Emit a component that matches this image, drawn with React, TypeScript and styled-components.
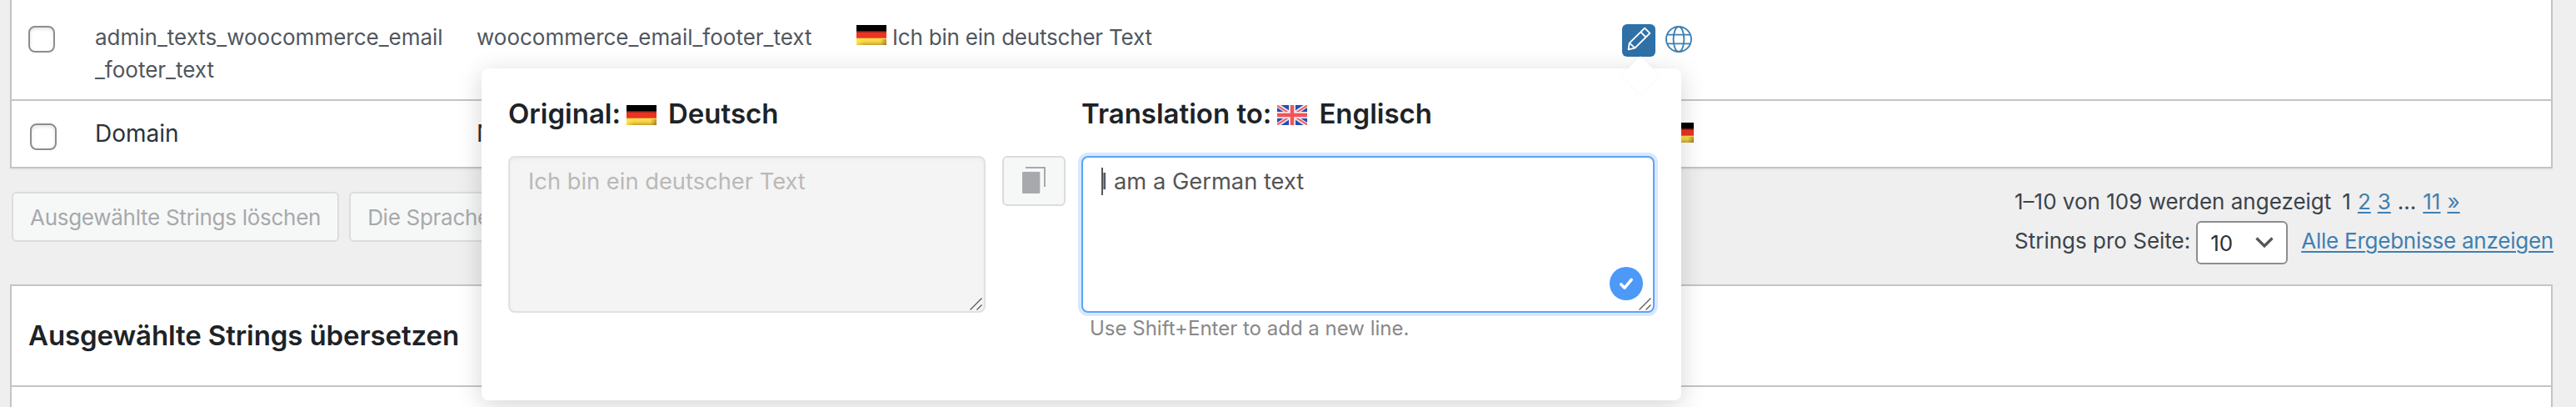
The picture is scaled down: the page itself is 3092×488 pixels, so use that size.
import React from 'react';
import styled, { createGlobalStyle, css } from 'styled-components';

const GlobalStyle = createGlobalStyle`
  * {
    box-sizing: border-box;
  }

  body {
    margin: 0;
    background: #efefef;
    color: #3c434a;
    font-family: Inter, "Liberation Sans", sans-serif;
    font-size: 26px;
    line-height: 39px;
  }
`;

const Page = styled.div`
  position: relative;
  height: 488px;
  padding: 0 28px 0 12px;
  overflow: hidden;
`;

const Table = styled.div`
  background: #fff;
  border: 2px solid #c3c4c9;
  border-top: 0;
  box-shadow: 0 2px 2px rgba(0, 0, 0, 0.04);
`;

const Row = styled.div<{ $first?: boolean }>`
  display: grid;
  grid-template-columns: 100px 458px 456px 919px 1fr;
  align-items: start;

  ${({ $first }) =>
    $first
      ? css`
          height: 121px;
          padding-top: 25px;
          color: #50575e;
          border-bottom: 2px solid #c3c4c9;
        `
      : css`
          height: 79px;
          padding-top: 20px;
          color: #2c3338;
          font-size: 28px;
        `}
`;

const Checkbox = styled.span<{ $indent: number; $top: number }>`
  width: 32px;
  height: 32px;
  margin: ${({ $top }) => $top}px 0 0 ${({ $indent }) => $indent}px;
  border: 2px solid #8c8c93;
  border-radius: 8px;
  background: #fff;
  box-shadow: inset 0 2px 4px rgba(0, 0, 0, 0.1);
`;

const Domain = styled.div`
  width: 424px;
  overflow-wrap: anywhere;
`;

const Value = styled.div`
  display: flex;
  align-items: flex-start;
  gap: 7px;
  letter-spacing: -0.2px;

  svg {
    margin-top: 5px;
  }
`;

const Actions = styled.div`
  display: flex;
  align-items: flex-start;
  gap: 11px;
  padding-top: 4px;
`;

const EditButton = styled.button`
  display: block;
  width: 40px;
  height: 39px;
  padding: 0;
  border: 0;
  border-radius: 6px;
  background: #2f70a6;
`;

const LanguageFlag = styled.div`
  display: flex;
  padding: 6px 0 0 50px;
`;

const Flag = styled.svg`
  flex: none;
  display: block;
  width: 36px;
  height: 24px;
`;

const Toolbar = styled.div`
  display: flex;
  justify-content: space-between;
  align-items: flex-start;
  height: 139px;
  padding-left: 2px;
`;

const BulkActions = styled.div`
  display: flex;
  gap: 12px;
  padding-top: 28px;
`;

const BulkButton = styled.button`
  height: 60px;
  padding: 0 20px;
  border: 2px solid #dcdcde;
  border-radius: 6px;
  background: #f6f8f7;
  color: #a7a9ad;
  font: inherit;
  letter-spacing: -0.28px;
  white-space: nowrap;
`;

const Pagination = styled.div`
  width: 646px;
  padding-top: 20px;
`;

const PageLinks = styled.div`
  display: flex;
  gap: 8px;
`;

const Count = styled.span`
  margin-right: 5px;
`;

const Link = styled.a`
  color: #3f80b0;
  text-decoration: underline;
  text-decoration-thickness: 2px;
  text-underline-offset: 3px;
`;

const PerPage = styled.div`
  display: flex;
  align-items: center;
  margin-top: 4px;
  white-space: nowrap;
`;

const PerPageLabel = styled.span`
  flex: none;
  padding-bottom: 5px;
`;

const Select = styled.div`
  display: flex;
  flex: none;
  align-items: center;
  justify-content: space-between;
  width: 110px;
  height: 52px;
  margin: 0 16px 0 7px;
  padding: 0 15px 0 15px;
  border: 2px solid #8c8c93;
  border-radius: 6px;
  background: #fff;
  color: #2c3338;
`;

const AllLink = styled(Link)`
  padding-bottom: 5px;
  letter-spacing: -0.24px;
`;

const Panel = styled.section`
  height: 160px;
  border: 2px solid #c3c4c9;
  background: #fff;
`;

const PanelTitle = styled.h2`
  display: flex;
  align-items: center;
  height: 121px;
  margin: 0;
  padding: 0 20px;
  border-bottom: 2px solid #c3c4c9;
  color: #1d2327;
  font-size: 33px;
  font-weight: 600;
  letter-spacing: -0.1px;
`;

/* floating editor that hangs below the pencil button */
const Popup = styled.div`
  position: absolute;
  top: 82px;
  left: 578px;
  display: flex;
  width: 1440px;
  height: 398px;
  padding: 34px 32px;
  border-radius: 8px;
  background: #fff;
  box-shadow: 0 6px 30px rgba(0, 0, 0, 0.17);

  &::before {
    content: '';
    position: absolute;
    top: -8px;
    right: 33px;
    width: 32px;
    height: 32px;
    background: #fff;
    box-shadow: 0 0 6px rgba(0, 0, 0, 0.04);
    transform: rotate(45deg);
  }
`;

const Column = styled.div<{ $width: number }>`
  width: ${({ $width }) => $width}px;
`;

const ColumnTitle = styled.h3`
  display: flex;
  align-items: center;
  height: 40px;
  margin: 0 0 31px;
  color: #1d2327;
  font-size: 33px;
  font-weight: 600;
  white-space: nowrap;

  svg {
    margin: 4px 14px 0 7px;
  }
`;

const Field = styled.div`
  position: relative;
  height: 188px;
`;

const TextArea = styled.textarea`
  display: block;
  width: 100%;
  height: 100%;
  margin: 0;
  padding: 9px 20px 9px 22px;
  border: 2px solid #5ba4f9;
  border-radius: 8px;
  outline: 0;
  resize: none;
  background: #fff;
  color: #555;
  font: inherit;
  font-size: 27.3px;
  line-height: 39px;
  box-shadow: 0 0 0 4px #d9e8fd;

  &:disabled {
    border-color: #e1e1e1;
    background: #f4f4f4;
    color: #b9b9b9;
    box-shadow: inset 0 2px 4px rgba(0, 0, 0, 0.04);
  }
`;

const Caret = styled.span`
  position: absolute;
  top: 14px;
  left: 24px;
  width: 2px;
  height: 33px;
  background: #555;
`;

const Grip = styled.svg`
  position: absolute;
  right: 4px;
  bottom: 3px;
`;

const SaveBadge = styled.button`
  position: absolute;
  right: 14px;
  bottom: 15px;
  width: 40px;
  height: 40px;
  padding: 0;
  border: 0;
  border-radius: 50%;
  background: #4c99f8;

  svg {
    display: block;
  }
`;

const CopyButton = styled.button`
  width: 76px;
  height: 60px;
  margin: 71px 19px 0 20px;
  padding: 0;
  border: 2px solid #dcdcde;
  border-radius: 6px;
  background: #f6f8f7;

  svg {
    display: block;
  }
`;

const Hint = styled.p`
  margin: 3px 0 0 10px;
  color: #888;
  font-size: 24px;
  line-height: 32px;
`;

const GermanFlag: React.FC = () => (
  <Flag viewBox="0 0 36 24">
    <defs>
      <linearGradient id="gold" x1="0" y1="0" x2="0" y2="1">
        <stop offset="0" stopColor="#fbdf4a" />
        <stop offset="0.5" stopColor="#f6d546" />
        <stop offset="1" stopColor="#c9a032" />
      </linearGradient>
      <linearGradient id="edge" x1="0" y1="0" x2="1" y2="0">
        <stop offset="0" stopColor="#fff04a" stopOpacity="0.7" />
        <stop offset="0.25" stopColor="#fff04a" stopOpacity="0" />
        <stop offset="0.8" stopColor="#6b5310" stopOpacity="0" />
        <stop offset="1" stopColor="#6b5310" stopOpacity="0.5" />
      </linearGradient>
    </defs>
    <rect width="36" height="8" fill="#000" />
    <rect y="7.5" width="36" height="8.5" fill="#e93323" />
    <rect y="7.3" width="36" height="1.2" fill="#7a1710" />
    <rect y="15.7" width="36" height="8.3" fill="url(#gold)" />
    <rect y="17" width="36" height="7" fill="url(#edge)" />
  </Flag>
);

const BritishFlag: React.FC = () => (
  <Flag viewBox="0 0 36 24">
    <rect width="36" height="24" fill="#2150b3" />
    <path d="M0 0L36 24M36 0L0 24" stroke="#f3e4ee" strokeWidth="5" />
    <path d="M0 0.6L36 23.4M36 0.6L0 23.4" stroke="#ef5c60" strokeWidth="2" />
    <path d="M18 0V24M0 12H36" stroke="#f6e6ec" strokeWidth="8" />
    <path d="M18 0V24M0 12H36" stroke="#ef5658" strokeWidth="4.4" />
  </Flag>
);

const PencilIcon: React.FC = () => (
  <svg width="40" height="39" viewBox="0 0 40 39" fill="none" stroke="#fff" strokeWidth="1.9" strokeLinejoin="round">
    <path d="M27.2 4.6L33.4 10.8L15.4 28.6L7.6 30.4L8.8 22.6Z" />
    <path d="M22.4 9.4L28.6 15.6M8.8 22.4L15.4 28.6" />
  </svg>
);

const GlobeIcon: React.FC = () => (
  <svg width="34" height="36" viewBox="0 0 34 36" fill="none" stroke="#3f80b0" strokeWidth="1.9">
    <circle cx="17" cy="18" r="15" />
    <ellipse cx="17" cy="18" rx="6.4" ry="15" />
    <path d="M3.2 12.6H30.8M3.2 23.4H30.8" />
  </svg>
);

const GripIcon: React.FC = () => (
  <Grip width="15" height="15" viewBox="0 0 15 15" fill="none" stroke="#555" strokeWidth="1.2">
    <path d="M0.5 14.5L14.5 0.5M8.5 14.5L14.5 8.5" />
  </Grip>
);

const App: React.FC = () => {
  return (
    <Page>
      <GlobalStyle />
      <Table>
        <Row $first>
          <Checkbox $indent={20} $top={6} />
          <Domain>admin_texts_woocommerce_email_footer_text</Domain>
          <div>woocommerce_email_footer_text</div>
          <Value>
            <GermanFlag />
            Ich bin ein deutscher Text
          </Value>
          <Actions>
            <EditButton>
              <PencilIcon />
            </EditButton>
            <GlobeIcon />
          </Actions>
        </Row>
        <Row>
          <Checkbox $indent={22} $top={7} />
          <Domain>Domain</Domain>
          <div>N</div>
          <div />
          <LanguageFlag>
            <GermanFlag />
          </LanguageFlag>
        </Row>
      </Table>

      <Toolbar>
        <BulkActions>
          <BulkButton>Ausgewählte Strings löschen</BulkButton>
          <BulkButton>Die Sprache</BulkButton>
        </BulkActions>
        <Pagination>
          <PageLinks>
            <Count>1–10 von 109 werden angezeigt</Count>
            <span>1</span>
            <Link>2</Link>
            <Link>3</Link>
            <span>…</span>
            <Link>11</Link>
            <Link>»</Link>
          </PageLinks>
          <PerPage>
            <PerPageLabel>Strings pro Seite:</PerPageLabel>
            <Select>
              10
              <svg width="22" height="14" viewBox="0 0 22 14" fill="none" stroke="#555" strokeWidth="3.2">
                <path d="M1.5 1.5L11 11L20.5 1.5" />
              </svg>
            </Select>
            <AllLink>Alle Ergebnisse anzeigen</AllLink>
          </PerPage>
        </Pagination>
      </Toolbar>

      <Panel>
        <PanelTitle>Ausgewählte Strings übersetzen</PanelTitle>
      </Panel>

      <Popup>
        <Column $width={573}>
          <ColumnTitle>
            Original:
            <GermanFlag />
            Deutsch
          </ColumnTitle>
          <Field>
            <TextArea disabled defaultValue="Ich bin ein deutscher Text" />
            <GripIcon />
          </Field>
        </Column>
        <CopyButton>
          <svg width="72" height="56" viewBox="0 0 72 56" fill="none">
            <rect x="22" y="17" width="21.3" height="26" rx="1" fill="#a7a9ad" />
            <path d="M26 12H49V35" stroke="#a7a9ad" strokeWidth="2" />
          </svg>
        </CopyButton>
        <Column $width={688}>
          <ColumnTitle>
            Translation to:
            <BritishFlag />
            Englisch
          </ColumnTitle>
          <Field>
            <TextArea defaultValue="I am a German text" />
            <Caret />
            <SaveBadge>
              <svg width="40" height="40" viewBox="0 0 40 40" fill="none" stroke="#fff" strokeWidth="3.6" strokeLinecap="round" strokeLinejoin="round">
                <path d="M13.8 21L18 25.2L26.2 15.4" />
              </svg>
            </SaveBadge>
            <GripIcon />
          </Field>
          <Hint>Use Shift+Enter to add a new line.</Hint>
        </Column>
      </Popup>
    </Page>
  );
};

export default App;
